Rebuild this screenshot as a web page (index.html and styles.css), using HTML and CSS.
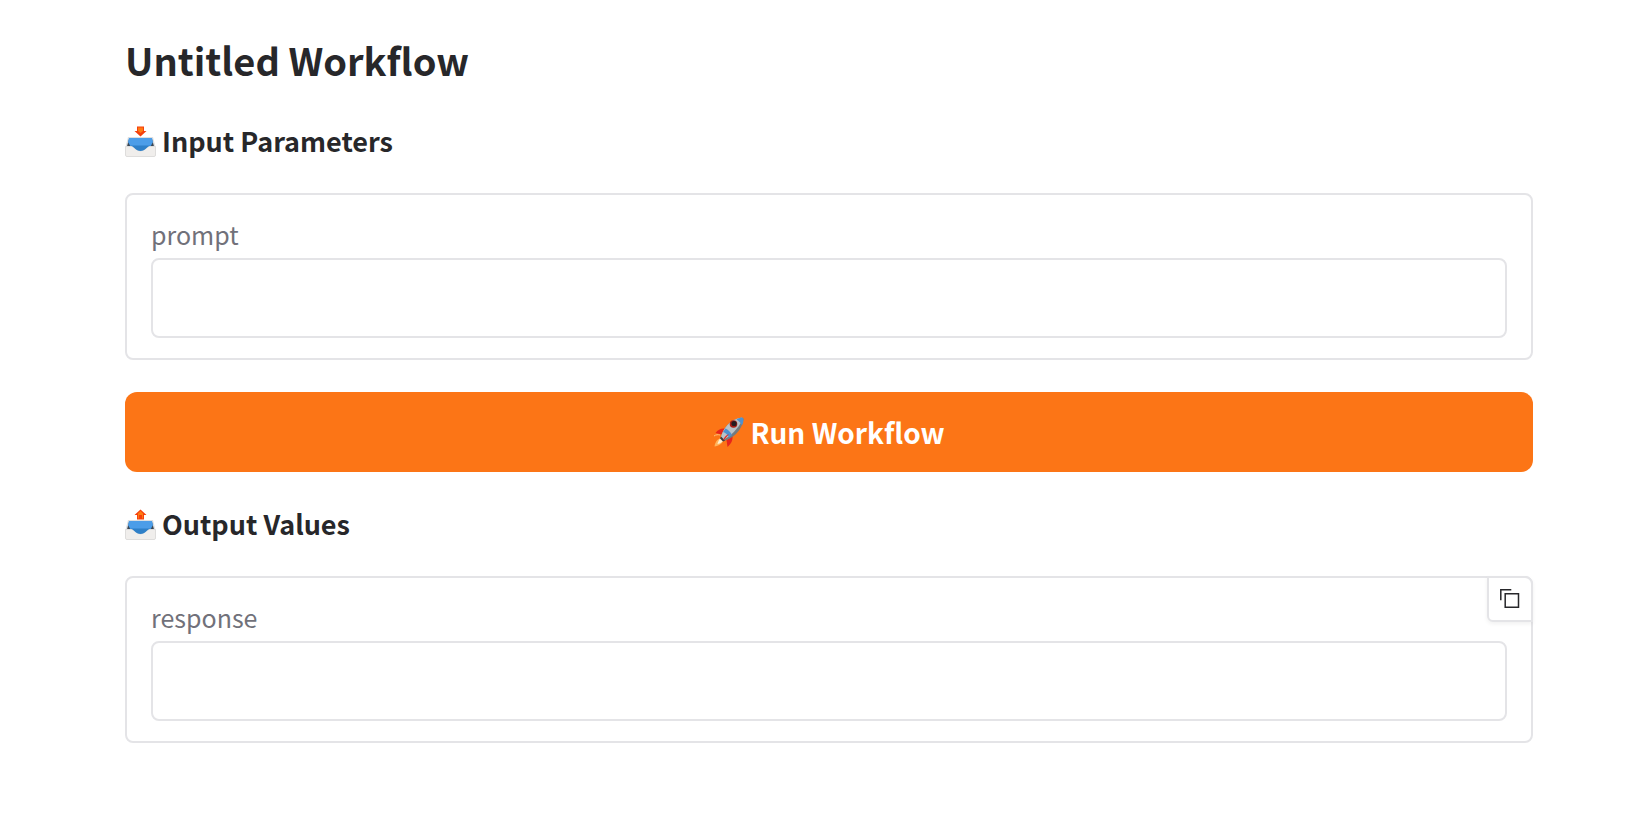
FILE: index.html
```html
<!DOCTYPE html>
<html lang="en">
<head>
<meta charset="utf-8">
<meta name="viewport" content="width=device-width, initial-scale=1">
<title>Untitled Workflow</title>
<link rel="stylesheet" href="styles.css">
</head>
<body>
<main class="page">
  <h1 class="title">Untitled Workflow</h1>

  <h2 class="section-title">
    <svg class="emoji" viewBox="0 0 31 31" aria-hidden="true">
      <path d="M3 11h25l2.500 10H.5z" fill="#dedfe0"/>
      <path d="M4 13h23l2 7.500H2z" fill="#3b4652"/>
      <path d="M4 12h23l1 4-2.500 4.500h-20L3 16z" fill="#4c9de8"/>
      <path d="M.5 20.500h6.500c3 0 4.500 4.500 8.500 4.500s5.500-4.500 8.500-4.500h6.500v8.500a1.500 1.500 0 0 1-1.500 1.500H2A1.500 1.500 0 0 1 .5 29z" fill="#f0eeec" stroke="#dedddc"/>
      <path d="M5 19.500h21c-4 .5-5.500 5.500-10.500 5.500S9 20 5 19.500z" fill="#2f80c8"/>
      <path d="M12 .5h7v4.500h2.500l-6 5.500-6-5.500H12z" fill="#f5400c"/>
      <path d="M13 1.500h5V5l-2.500 2L13 5z" fill="#ff7a12"/>
    </svg>
    Input Parameters
  </h2>
  <section class="card">
    <label class="label" for="prompt">prompt</label>
    <input class="field" id="prompt" type="text">
  </section>

  <button class="run" type="button">
    <svg class="emoji" viewBox="0 0 31 31" aria-hidden="true">
      <path d="M9 21c-4 0-7 4-7.500 8.500C5.500 29 9 27 10.500 23z" fill="#ffb45c"/>
      <path d="M8.500 20.500C6 22 5 24.500 4.500 27c3-.5 5-2 6.500-4.500z" fill="#fff1d2"/>
      <path d="M1 19c2-1.500 4-1.500 6-1" fill="none" stroke="#ffc27c"/>
      <path d="M12 11.500c-4-.5-7 1-9.500 4.500l6 1.500z" fill="#e7251c"/>
      <path d="M19.500 19c.5 4-1.500 8-5 11l-1-7z" fill="#e7251c"/>
      <path d="M8 20c1.500-7 8-18 21-19.500 1 .5 1.500 1 1.500 2C29 14 19 21.500 11 24z" fill="#737b80"/>
      <path d="M8 20C9.500 13 16 2 29 .5c.5 1 .5 1.500.5 2C25 12 18 19 10 23z" fill="#b9c2c8"/>
      <path d="M23.500 2.500C26 1 28 .5 29 .5c1 .5 1.500 1 1.500 2 0 2-.5 4-1.500 6-1-2.500-3-4.500-5.500-6z" fill="#4e91cf"/>
      <path d="M12.500 11.500c2.500 1 5.500 4 6.500 6.500l-3 2.500c-1-2.500-3.500-5-6-5.500z" fill="#4e91cf"/>
      <path d="M8 19.500l4 4-2 1-3-3z" fill="#393c40"/>
      <circle cx="20.500" cy="7" r="3.800" fill="#a51e18"/>
      <circle cx="21" cy="6.500" r="2.600" fill="#251b20"/>
      <path d="M16 17c-1.500 2-3.500 4.500-6 6.500 1-3 3-5.500 6-6.500z" fill="#e7251c"/>
    </svg>
    Run Workflow
  </button>

  <h2 class="section-title">
    <svg class="emoji" viewBox="0 0 31 31" aria-hidden="true">
      <path d="M3 11h25l2.500 10H.5z" fill="#dedfe0"/>
      <path d="M4 13h23l2 7.500H2z" fill="#3b4652"/>
      <path d="M4 12h23l1 4-2.500 4.500h-20L3 16z" fill="#4c9de8"/>
      <path d="M.5 20.500h6.500c3 0 4.500 4.500 8.500 4.500s5.500-4.500 8.500-4.500h6.500v8.500a1.500 1.500 0 0 1-1.500 1.500H2A1.500 1.500 0 0 1 .5 29z" fill="#f0eeec" stroke="#dedddc"/>
      <path d="M5 19.500h21c-4 .5-5.500 5.500-10.500 5.500S9 20 5 19.500z" fill="#2f80c8"/>
      <path d="M15.500.5l6 5.500H19v4.500h-7V6H9.500z" fill="#f5400c"/>
      <path d="M15.500 2L18 4.500v5h-1V6h-3v3.500h-1v-5z" fill="#ff7a12"/>
    </svg>
    Output Values
  </h2>
  <section class="card">
    <label class="label" for="response">response</label>
    <input class="field" id="response" type="text" readonly>
    <button class="copy" type="button" aria-label="Copy response">
      <svg class="copy-icon" viewBox="0 0 20 20" aria-hidden="true">
        <path d="M5.200 4.800h13.300v13.400H5.200zM.8 11.200V.8h10.500" fill="none" stroke="#27272a" stroke-width="1.500"/>
      </svg>
    </button>
  </section>
</main>
</body>
</html>
```
FILE: styles.css
```css
* {
  box-sizing: border-box;
}

body {
  margin: 0;
  background: #fff;
  color: #27272a;
  font-family: "Noto Sans CJK JP", "Noto Sans", sans-serif;
}

.page {
  display: flex;
  flex-direction: column;
  gap: 32px;
  padding: 36px 113px 64px 125px;
}

.title {
  margin: 0 0 5px;
  font-size: 38px;
  line-height: 48px;
  font-weight: 700;
}

.section-title {
  display: flex;
  align-items: center;
  gap: 6px;
  margin: 0;
  font-size: 27px;
  line-height: 40px;
  font-weight: 700;
}

.emoji {
  width: 31px;
  height: 31px;
  flex: none;
}

.card {
  position: relative;
  display: flex;
  flex-direction: column;
  gap: 8px;
  padding: 23px 24px 20px;
  border: 2px solid #e4e4e7;
  border-radius: 8px;
}

.label {
  align-self: flex-start;
  color: #71717a;
  font-size: 25px;
  line-height: 32px;
}

.field {
  width: 100%;
  height: 80px;
  padding: 16px 20px;
  border: 2px solid #e4e4e7;
  border-radius: 8px;
  background: #fff;
  color: inherit;
  font: inherit;
  font-size: 25px;
}

.run {
  display: flex;
  align-items: center;
  justify-content: center;
  gap: 6px;
  height: 80px;
  border: 0;
  border-radius: 12px;
  background: #fc7516;
  color: #fff;
  font: inherit;
  font-size: 28px;
  font-weight: 700;
}

.copy {
  position: absolute;
  top: -2px;
  right: -2px;
  display: flex;
  align-items: center;
  justify-content: center;
  width: 46px;
  height: 46px;
  padding: 0;
  border: 2px solid #e4e4e7;
  border-radius: 0 8px 0 6px;
  background: #fff;
  box-shadow: 0 2px 4px rgba(0, 0, 0, 0.06);
}

.copy-icon {
  width: 20px;
  height: 20px;
}
```
